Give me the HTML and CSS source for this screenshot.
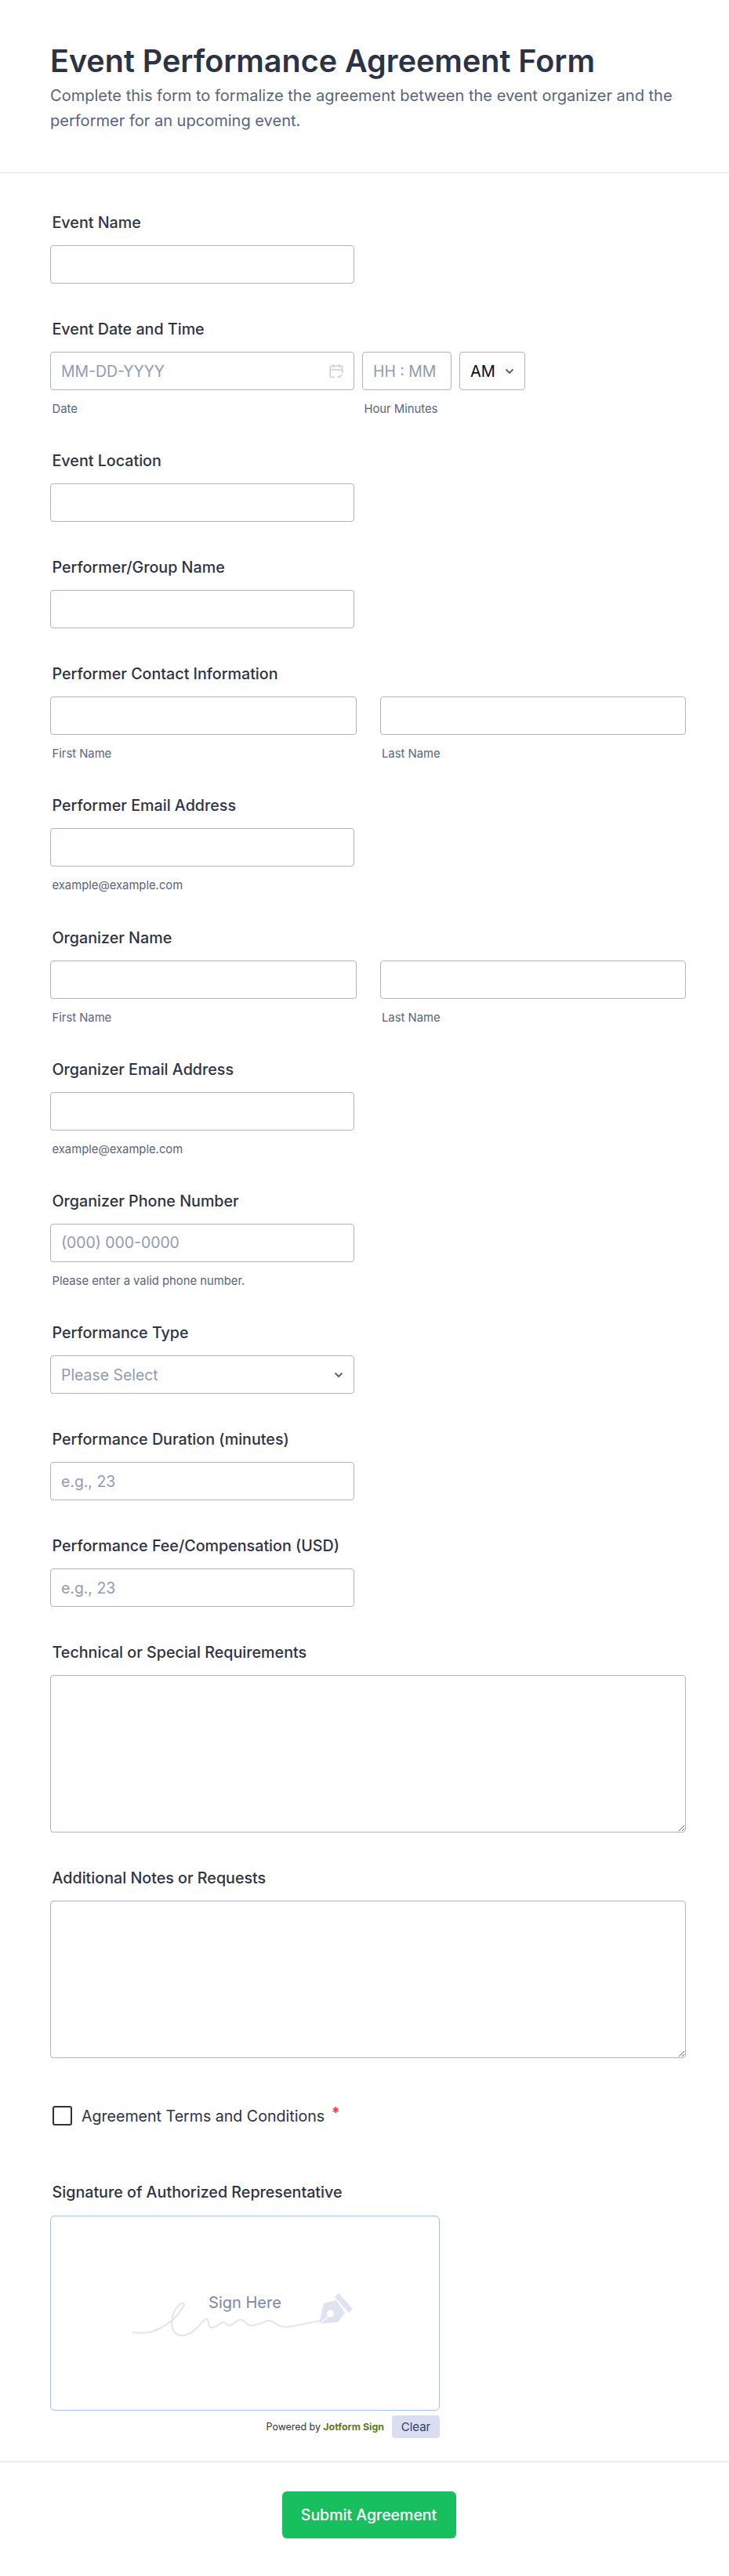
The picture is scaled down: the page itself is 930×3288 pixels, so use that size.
FILE: index.html
```html
<!DOCTYPE html>
<html lang="en">
<head>
<meta charset="utf-8">
<title>Event Performance Agreement Form</title>
<link rel="stylesheet" href="styles.css">
</head>
<body>
<header class="head">
  <h1>Event Performance Agreement Form</h1>
  <p>Complete this form to formalize the agreement between the event organizer and the performer for an upcoming event.</p>
</header>
<form class="form">
  <div class="field"><label class="label">Event Name</label><input class="input narrow" type="text"></div>
  <div class="field"><label class="label">Event Date and Time</label>
    <div class="dt">
      <div class="col date"><div class="wrap"><input class="input" type="text" placeholder="MM-DD-YYYY">
        <svg class="cal" viewBox="0 0 18 20" width="18" height="20" fill="none" stroke="#c9ced9" stroke-width="1.5"><path d="M7 17.5H3a1.8 1.8 0 0 1-1.8-1.8V5A1.8 1.8 0 0 1 3 3.2h12A1.8 1.8 0 0 1 16.800 5v7"/><path d="M1.200 8h15.600M5 1v4M13 1v4"/><path d="M10.500 16l2 2 4-4" stroke-width="1.300"/></svg></div>
        <span class="sub">Date</span></div>
      <div class="col time"><input class="input" type="text" placeholder="HH : MM"><span class="sub">Hour Minutes</span></div>
      <div class="col ampm"><div class="wrap"><select class="input sel dark"><option>AM</option><option>PM</option></select>
        <svg class="chev" viewBox="0 0 12 8" width="12" height="8"><path d="M1.500 1.500 6 6l4.500-4.500" fill="none" stroke="#57647e" stroke-width="2"/></svg></div></div>
    </div>
  </div>
  <div class="field"><label class="label">Event Location</label><input class="input narrow" type="text"></div>
  <div class="field"><label class="label">Performer/Group Name</label><input class="input narrow" type="text"></div>
  <div class="field"><label class="label">Performer Contact Information</label>
    <div class="names">
      <div class="col"><input class="input" type="text"><span class="sub">First Name</span></div>
      <div class="col"><input class="input" type="text"><span class="sub">Last Name</span></div>
    </div>
  </div>
  <div class="field"><label class="label">Performer Email Address</label><input class="input narrow" type="email"><span class="sub">example@example.com</span></div>
  <div class="field"><label class="label">Organizer Name</label>
    <div class="names">
      <div class="col"><input class="input" type="text"><span class="sub">First Name</span></div>
      <div class="col"><input class="input" type="text"><span class="sub">Last Name</span></div>
    </div>
  </div>
  <div class="field"><label class="label">Organizer Email Address</label><input class="input narrow" type="email"><span class="sub">example@example.com</span></div>
  <div class="field"><label class="label">Organizer Phone Number</label><input class="input narrow" type="tel" placeholder="(000) 000-0000"><span class="sub">Please enter a valid phone number.</span></div>
  <div class="field"><label class="label">Performance Type</label>
    <div class="wrap narrow"><select class="input sel"><option>Please Select</option></select>
      <svg class="chev" viewBox="0 0 12 8" width="12" height="8"><path d="M1.500 1.500 6 6l4.500-4.500" fill="none" stroke="#57647e" stroke-width="2"/></svg></div>
  </div>
  <div class="field"><label class="label">Performance Duration (minutes)</label><input class="input narrow" type="text" placeholder="e.g., 23"></div>
  <div class="field"><label class="label">Performance Fee/Compensation (USD)</label><input class="input narrow" type="text" placeholder="e.g., 23"></div>
  <div class="field"><label class="label">Technical or Special Requirements</label><textarea class="input area"></textarea></div>
  <div class="field"><label class="label">Additional Notes or Requests</label><textarea class="input area"></textarea></div>
  <div class="check"><input class="box" type="checkbox"><span class="check-text">Agreement Terms and Conditions</span><span class="star">*</span></div>
  <div class="field sig-field"><label class="label">Signature of Authorized Representative</label>
    <div class="sig">
      <svg class="sig-art" viewBox="0 0 497 249" width="497" height="249">
        <path d="M106 149c8 1 14 1 20 0 11-2 20-8 28-14 7-5 12-13 16-19 2-3 1-4-1-4-5 0-11 8-13 17-1 8-2 13 2 19 4 5 10 6 16 4 7-2 12-7 17-13 4-4 6-7 9-7 3 1 1 6 3 9 2 4 8 1 12-2 4-3 6-4 8-2 3 3 4 4 7 3 5-2 9-8 14-7 4 1 6 5 10 7 4 1 8 0 12-2 5-1 9-4 13-4 5 0 9 5 14 7 6 2 12 1 18 0l33-7" fill="none" stroke="#e1e5f4" stroke-width="2.200" stroke-linecap="round"/>
        <path d="M343 138 349 112 365 108 376 124 367 136Z" fill="#dfe3f0"/>
        <path d="M368 99 386 119 381 124 363 104Z" fill="#dfe3f0"/>
        <circle cx="357.500" cy="125" r="4.500" fill="#fff"/>
        <path d="M343 139 356 127" stroke="#fff" stroke-width="1.500"/>
      </svg>
      <span class="sig-text">Sign Here</span>
    </div>
    <div class="sig-foot"><span class="powered">Powered by <b class="brand">Jotform Sign</b></span><button class="clear" type="button">Clear</button></div>
  </div>
  <div class="foot"><button class="submit" type="button">Submit Agreement</button></div>
</form>
</body>
</html>
```

FILE: styles.css
```css
* { box-sizing: border-box; }
html, body { margin: 0; padding: 0; background: #fff; }
body { font-family: Inter, "Liberation Sans", sans-serif; color: #2c3345; width: 930px; height: 3288px; overflow: hidden; }
.head { height: 221px; padding: 54px 55px 0 64px; border-bottom: 1px solid #dadee8; }
.head h1 { margin: 0; font-size: 39.500px; line-height: 48px; font-weight: 600; color: #2c3345; }
.head p { margin: 4px 0 0; font-size: 20.050px; line-height: 32px; color: #57647e; }
.form { padding: 51px 55px 0 64px; }
.field { padding-bottom: 46px; }
.label { display: block; height: 24px; line-height: 24px; margin: 0 0 17px 2.500px; font-size: 19.700px; font-weight: 500; color: #2c3345; }
.input { display: block; width: 100%; height: 49px; padding: 0 13px; border: 1px solid #b0b5c4; border-radius: 4px; background: #fff; font-family: inherit; font-size: 19.400px; font-weight: 400; color: #2c3345; outline: none; }
.input::placeholder { color: #8f9bb3; opacity: 1; }
.narrow { width: 388px; }
.sub { display: block; height: 16.200px; line-height: 16px; margin: 16px 0 0 2.500px; font-size: 14.800px; color: #57647e; }
.dt { display: flex; gap: 10px; }
.date { width: 388px; }
.time { width: 114px; }
.ampm { width: 84px; }
.wrap { position: relative; }
.cal { position: absolute; right: 14px; top: 15px; }
.chev { position: absolute; right: 14px; top: 21px; }
.sel { appearance: none; -webkit-appearance: none; color: #8f9bb3; }
.dark { font-size: 20px; color: #0a0a0a; }
.names { display: grid; grid-template-columns: 1fr 1fr; gap: 30px; }
.area { height: 201px; padding: 12px; resize: vertical; }
.check { display: flex; align-items: center; height: 25px; margin: 15px 0 0 2.500px; }
.box { appearance: none; -webkit-appearance: none; width: 25px; height: 25px; margin: 0 12.500px 0 0; border: 2px solid #2c2f45; border-radius: 3px; background: #fff; }
.check-text { font-size: 19.600px; color: #2c3345; }
.star { margin-left: 9px; font-size: 19.600px; font-weight: 600; color: #f23a3c; position: relative; top: -4px; }
.sig-field { margin-top: 73px; padding-bottom: 0; }
.sig-field .label { margin-bottom: 18px; }
.sig { position: relative; width: 497px; height: 249px; border: 1px solid #a9bfdf; border-radius: 6px; }
.sig-art { position: absolute; left: -1px; top: -1px; }
.sig-text { position: absolute; left: 0; right: 0; top: 98px; text-align: center; font-size: 20px; line-height: 24px; color: #7a88a6; }
.sig-foot { display: flex; align-items: center; justify-content: flex-end; width: 497px; height: 29px; margin-top: 6px; gap: 10px; }
.powered { font-size: 12.400px; color: #2c3345; }
.brand { font-weight: 700; color: #5e7a14; }
.clear { width: 61px; height: 29px; padding: 0; border: 0; border-radius: 4px; background: #dadef3; font-family: inherit; font-size: 15px; color: #343c6a; }
.foot { display: flex; justify-content: center; margin: 29px -55px 0 -64px; height: 147px; padding: 37px 0 0 11px; border-top: 2px solid #eaebf2; }
.submit { width: 222px; height: 60px; padding: 0; border: 0; border-radius: 6px; background: #18bf5f; font-family: inherit; font-size: 19.500px; font-weight: 500; color: #fff; }
```
